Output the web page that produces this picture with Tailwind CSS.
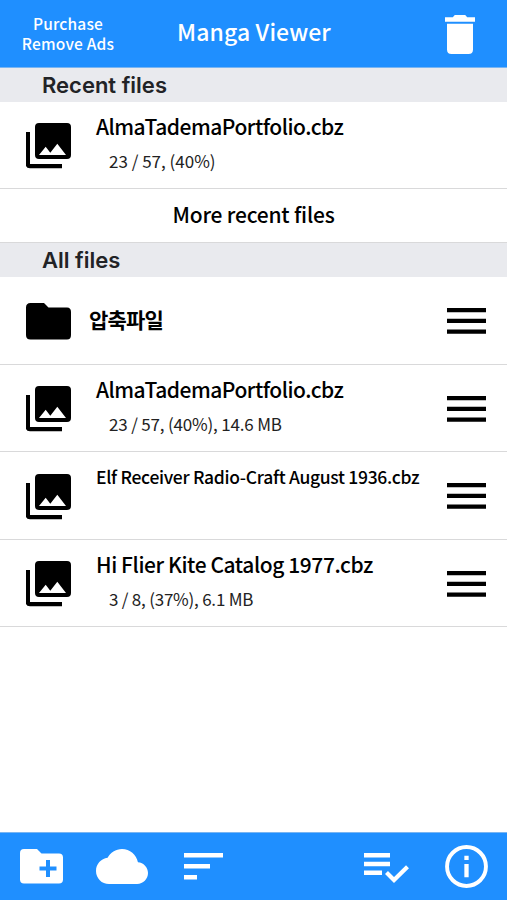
<!DOCTYPE html>
<html lang="en">
<head>
<meta charset="utf-8">
<title>Manga Viewer</title>
<script src="https://cdn.jsdelivr.net/npm/@tailwindcss/browser@4"></script>
</head>
<body class="bg-white">
<svg class="hidden">
  <symbol id="gallery" viewBox="0 0 46 46">
    <path fill-rule="evenodd" d="M13 0H41Q45 0 45 4V32Q45 36 41 36H13Q9 36 9 32V4Q9 0 13 0ZM13 32H40L31.300 20.800L24.300 29.800L19.700 23.800Z"/>
    <path d="M-0.300 9H4V41H36V45.300H4Q-0.300 45.300 -0.300 41Z"/>
  </symbol>
  <symbol id="grip" viewBox="0 0 39 26">
    <path d="M0 0H39V4.300H0ZM0 10.800H39V15.100H0ZM0 21.500H39V25.800H0Z"/>
  </symbol>
</svg>
<div class="flex h-[900px] w-[507px] flex-col overflow-hidden whitespace-nowrap bg-white font-['Noto_Sans_CJK_KR','Noto_Sans',sans-serif] font-medium text-black">
  <header class="flex h-[68px] shrink-0 border-b border-[#79b5f2] bg-[#1f8fff] text-white">
    <div class="w-[136px] pt-[13px] text-center text-[15.500px] leading-5 tracking-[0.200px]">Purchase<br>Remove Ads</div>
    <h1 class="w-[236px] pt-[17px] text-center text-[23px] leading-7 tracking-[0.100px]">Manga Viewer</h1>
    <svg class="ml-[73px] mt-[15px] h-[39px] w-[30px]" viewBox="0 0 30 39" fill="currentColor"><path d="M0 2.200H7.800L9.800 0H20.200L22.200 2.200H30V6.700H0ZM2 8.800H28V34.500Q28 39 23.500 39H6.500Q2 39 2 34.500Z"/></svg>
  </header>
  <h2 class="h-[34px] shrink-0 bg-[#e9eaee] pl-[42px] font-[Inter,sans-serif] text-[22px] font-semibold leading-[34px] text-[#222326]">Recent files</h2>
  <main class="flex grow flex-col">
    <div class="flex h-[87px] border-b border-[#d9d9da]">
      <svg class="ml-[26px] mt-[21px] h-[46px] w-[46px] overflow-visible"><use href="#gallery"/></svg>
      <div class="ml-[24px] pt-[10px]"><div class="text-[21px] leading-7 tracking-[-0.500px]">AlmaTademaPortfolio.cbz</div><div class="ml-[13px] mt-[9px] text-[17px] font-normal leading-6 text-[#222]">23 / 57, (40%)</div></div>
    </div>
    <div class="h-[54px] border-b border-[#d9d9da] text-center text-[21px] leading-[50px] tracking-[-0.200px]">More recent files</div>
    <h2 class="h-[34px] shrink-0 bg-[#e9eaee] pl-[42px] font-[Inter,sans-serif] text-[22px] font-semibold leading-[35px] text-[#222326]">All files</h2>
    <div class="flex h-[88px] border-b border-[#d9d9da]">
      <svg class="ml-[26px] mt-[26px] h-[37px] w-[46px]" viewBox="0 0 46 37"><path d="M4.500 0H18L22.500 4.500H41Q45 4.500 45 9V32Q45 36.500 41 36.500H4.500Q0 36.500 0 32V4.500Q0 0 4.500 0Z"/></svg>
      <div class="ml-[17px] pt-[26px] text-[21px] font-bold leading-8 tracking-[-0.800px]">압축파일</div>
      <svg class="ml-auto mr-[21px] mt-[31px] h-[26px] w-[39px]"><use href="#grip"/></svg>
    </div>
    <div class="flex h-[87px] border-b border-[#d9d9da]">
      <svg class="ml-[26px] mt-[21px] h-[46px] w-[46px] overflow-visible"><use href="#gallery"/></svg>
      <div class="ml-[24px] pt-[10px]"><div class="text-[21px] leading-7 tracking-[-0.500px]">AlmaTademaPortfolio.cbz</div><div class="ml-[13px] mt-[9px] text-[17px] font-normal leading-6 tracking-[-0.180px] text-[#222]">23 / 57, (40%), 14.6 MB</div></div>
      <svg class="ml-auto mr-[21px] mt-[31px] h-[26px] w-[39px]"><use href="#grip"/></svg>
    </div>
    <div class="flex h-[88px] border-b border-[#d9d9da]">
      <svg class="ml-[26px] mt-[22px] h-[46px] w-[46px] overflow-visible"><use href="#gallery"/></svg>
      <div class="ml-[24px] pt-[11px] text-[17.500px] leading-7 tracking-[-0.300px]">Elf Receiver Radio-Craft August 1936.cbz</div>
      <svg class="ml-auto mr-[21px] mt-[31px] h-[26px] w-[39px]"><use href="#grip"/></svg>
    </div>
    <div class="flex h-[87px] border-b border-[#d9d9da]">
      <svg class="ml-[26px] mt-[21px] h-[46px] w-[46px] overflow-visible"><use href="#gallery"/></svg>
      <div class="ml-[24px] pt-[10px]"><div class="text-[21px] leading-7 tracking-[-0.420px]">Hi Flier Kite Catalog 1977.cbz</div><div class="ml-[13px] mt-[9px] text-[17px] font-normal leading-6 tracking-[-0.220px] text-[#222]">3 / 8, (37%), 6.1 MB</div></div>
      <svg class="ml-auto mr-[21px] mt-[31px] h-[26px] w-[39px]"><use href="#grip"/></svg>
    </div>
  </main>
  <footer class="flex h-[68px] shrink-0 border-t border-[#79b5f2] bg-[#1f8fff] text-white">
    <svg class="ml-[20px] mt-[16px] h-[35px] w-[43px]" viewBox="0 0 43 35" fill="currentColor"><path fill-rule="evenodd" d="M4 0H17L21.500 4.500H39Q43 4.500 43 8.500V30.500Q43 34.500 39 34.500H4Q0 34.500 0 30.500V4Q0 0 4 0ZM26 11V17.500H19.500V21.500H26V28H30V21.500H36.500V17.500H30V11Z"/></svg>
    <svg class="ml-[33px] mt-[16px] h-[35px] w-[52px]" viewBox="0 4 24 16" preserveAspectRatio="none" fill="currentColor"><path d="M19.350 10.040C18.670 6.590 15.640 4 12 4 9.110 4 6.600 5.640 5.350 8.040 2.340 8.360 0 10.910 0 14c0 3.310 2.690 6 6 6h13c2.760 0 5-2.240 5-5 0-2.640-2.050-4.780-4.650-4.960z"/></svg>
    <svg class="ml-[36px] mt-[20px] h-[27px] w-[39px]" viewBox="0 0 39 27" fill="currentColor"><path d="M0 0H39V4.500H0ZM0 11H26V15.500H0ZM0 22H13V26.500H0Z"/></svg>
    <svg class="ml-[141px] mt-[20px] h-[31px] w-[46px]" viewBox="0 0 46 31" fill="currentColor"><path d="M0 0H26V4.500H0ZM0 8.800H26V13.300H0ZM0 17.400H18V21.900H0Z"/><path d="M22.500 19.500L30 27L43.500 13.700" fill="none" stroke="currentColor" stroke-width="4.200"/></svg>
    <svg class="ml-[35px] mt-[12px] h-[43px] w-[43px]" viewBox="0 0 44 44" fill="currentColor"><circle cx="22" cy="22" r="19.900" fill="none" stroke="currentColor" stroke-width="4"/><path d="M19.800 11H24.200V15.300H19.800ZM19.800 19.500H24.200V33H19.800Z"/></svg>
  </footer>
</div>
</body>
</html>
